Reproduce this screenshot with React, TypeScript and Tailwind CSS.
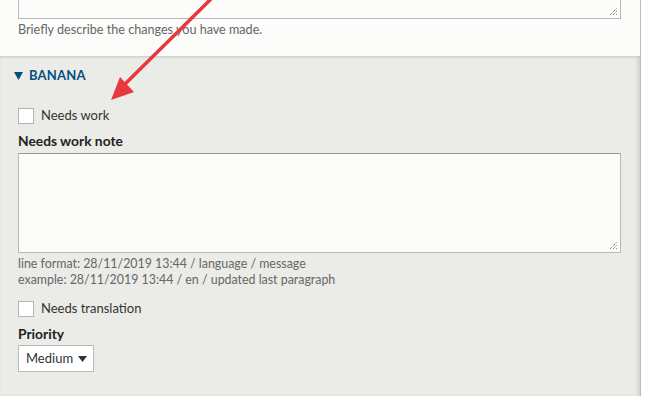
import React from 'react';

const Grip = () => (
  <svg className="absolute right-[2px] bottom-[2px]" width="9" height="9" viewBox="0 0 9 9">
    <path d="M1 8 L8 1 M4 8 L8 4 M7 8 L8 7" stroke="#555" strokeWidth="1" strokeDasharray="1 1" />
  </svg>
);

const Checkbox: React.FC<{ label: string }> = ({ label }) => (
  <label className="flex items-center gap-[7px] h-[16px]">
    <span className="w-[16px] h-[16px] bg-white border border-[#b4b4b4] flex-shrink-0" />
    <span className="text-[13px] text-[#333]">{label}</span>
  </label>
);

export default function App() {
  return (
    <div
      className="relative w-[648px] h-[396px] overflow-hidden bg-white"
      style={{ fontFamily: 'Lato, "Noto Sans", sans-serif' }}
    >
      <div className="w-[641px] h-full border-r border-[#bdbdbd] bg-[#fcfcfa] flex flex-col">
        <div className="h-[56px] px-[18px] flex-shrink-0">
          <div className="relative w-[603px] h-[19px] border border-t-0 border-[#b8b8b8] bg-[#fcfcfa]">
            <Grip />
          </div>
          <p className="mt-[3px] text-[12.6px] text-[#666] leading-[16px]">
            Briefly describe the changes you have made.
          </p>
        </div>

        <div className="flex-1 bg-[#ebebe7] shadow-[inset_0_2px_2px_rgba(0,0,0,0.08),inset_-3px_0_3px_rgba(0,0,0,0.08)]">
          <div className="pt-[7px] pl-[14px] flex items-center gap-[6px] h-[33px]">
            <svg width="9" height="8" viewBox="0 0 9 8">
              <path d="M0 0 L9 0 L4.5 8 Z" fill="#004f80" />
            </svg>
            <span className="text-[13px] font-bold text-[#004f80] tracking-[0.2px]">BANANA</span>
          </div>
          <div className="px-[18px]">
            <div className="mt-[19px]">
              <Checkbox label="Needs work" />
            </div>
            <div className="mt-[9px] text-[13.8px] font-bold text-[#222] leading-[16px]">Needs work note</div>
            <div className="relative mt-[4px] w-[603px] h-[100px] border border-[#b8b8b8] border-t-[#999] bg-[#fcfcfa]">
              <Grip />
            </div>
            <div className="mt-[3px] text-[12.4px] text-[#666] leading-[16px]">
              <div>line format: 28/11/2019 13:44 / language / message</div>
              <div>example: 28/11/2019 13:44 / en / updated last paragraph</div>
            </div>
            <div className="mt-[13px]">
              <Checkbox label="Needs translation" />
            </div>
            <div className="mt-[9px] text-[13.8px] font-bold text-[#222] leading-[16px]">Priority</div>
            <div className="mt-[3px] w-[76px] h-[27px] bg-white border border-[#b8b8b8] flex items-center justify-between pl-[7px] pr-[6px]">
              <span className="text-[13px] text-[#333]">Medium</span>
              <svg width="9" height="6" viewBox="0 0 9 6">
                <path d="M0 0 L9 0 L4.5 6 Z" fill="#333" />
              </svg>
            </div>
          </div>
        </div>
      </div>

      <svg className="absolute left-0 top-0 pointer-events-none" width="648" height="396">
        <line x1="212" y1="-2" x2="121" y2="88" stroke="#e8383d" strokeWidth="3.5" strokeLinecap="round" />
        <polygon points="111,100 120,77 134,92" fill="#e8383d" />
      </svg>
    </div>
  );
}
